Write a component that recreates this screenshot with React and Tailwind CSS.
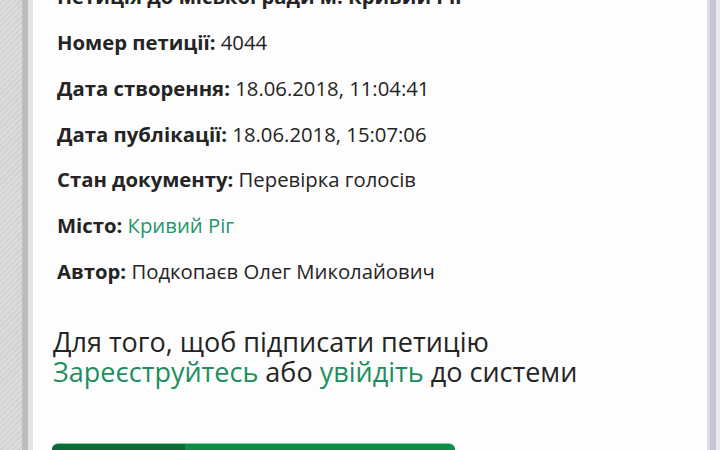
const rows = [
  { label: 'Петиція до міської ради м. Кривий Ріг', value: null },
  { label: 'Номер петиції:', value: '4044' },
  { label: 'Дата створення:', value: '18.06.2018, 11:04:41' },
  { label: 'Дата публікації:', value: '18.06.2018, 15:07:06' },
  { label: 'Стан документу:', value: 'Перевірка голосів' },
  { label: 'Місто:', value: 'Кривий Ріг', green: true },
  { label: 'Автор:', value: 'Подкопаєв Олег Миколайович' },
];

export default function App() {
  return (
    <div className="flex h-[450px] w-[720px] overflow-hidden bg-white font-['Open_Sans',sans-serif] text-[#242424]">
      <div className="w-[22px] shrink-0 bg-[repeating-linear-gradient(135deg,#dcdcdc_0px,#dcdcdc_2px,#d3d3d3_2px,#d3d3d3_4px)]" />
      <div className="w-[6px] shrink-0 bg-[#bdbdbd]" />
      <div className="w-[5px] shrink-0 bg-[#e4e4e4]" />
      <div className="flex min-w-0 flex-1 flex-col bg-[#fdfdfd] px-[19px]">
        <div className="-mt-[25.8px] flex flex-col pl-[5px]">
          {rows.map((r, i) => (
            <div key={i} className="whitespace-nowrap text-[20.3px] leading-[45.8px]">
              <span className="font-bold">{r.label}</span>
              {r.value && (
                <span className={r.green ? 'font-medium text-[#23966a]' : ''}> {r.value}</span>
              )}
            </div>
          ))}
        </div>
        <div className="mt-[32px] pl-[1px] text-[27px] leading-[30px] font-stretch-[90%]">
          <div>Для того, щоб підписати петицію</div>
          <div>
            <span className="font-medium text-[#1d8f5e]">Зареєструйтесь</span> або{' '}
            <span className="font-medium text-[#1d8f5e]">увійдіть</span> до системи
          </div>
        </div>
        <div className="mt-[56.7px] flex h-[40px] w-[403px] overflow-hidden rounded-t-[6px] border-t border-[#7fd3a0]">
          <div className="w-[133px] bg-[#0b6a36]" />
          <div className="flex-1 bg-[#0d8e44]" />
        </div>
      </div>
      <div className="w-[3px] shrink-0 bg-[#dcdce4]" />
      <div className="w-[6px] shrink-0 bg-[#c6c6d2]" />
      <div className="w-[4px] shrink-0 bg-[#e6e6ec]" />
    </div>
  );
}
